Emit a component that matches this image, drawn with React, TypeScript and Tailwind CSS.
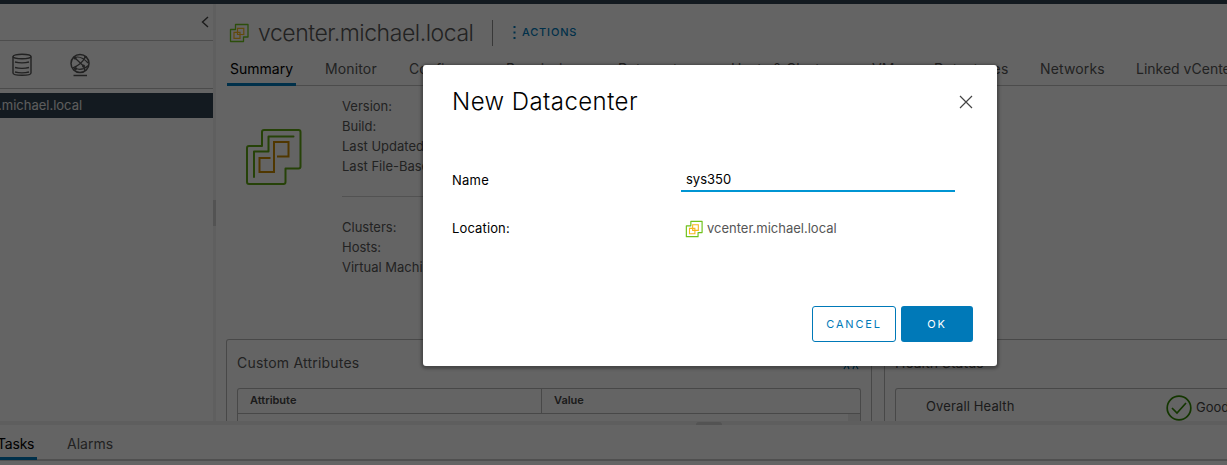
import { ReactNode } from "react";

function VcenterIcon({ className }: { className: string }) {
  return (
    <svg viewBox="0 0 20 20" fill="none" className={className}>
      <path d="M6.500 1.500H19V14h-4.500v4.500H1.500V6.500h5z" stroke="#6fc21c" strokeWidth="1.300" strokeLinejoin="round" />
      <path d="M8.500 5.300h6.300v6.200H8.500zM5 9.300h6v6H5z" stroke="#f5b81c" strokeWidth="1.200" />
    </svg>
  );
}

function VcenterLogo() {
  return (
    <svg viewBox="0 0 56 58" fill="none" className="h-[58px] w-14" strokeLinecap="round" strokeLinejoin="round">
      <path
        d="M18 2h34.500a2 2 0 0 1 2 2V38.500a2 2 0 0 1-2 2H39.500V54a2 2 0 0 1-2 2H3a2 2 0 0 1-2-2V20a2 2 0 0 1 2-2h13V4a2 2 0 0 1 2-2z"
        stroke="#60a515"
        strokeWidth="2"
      />
      <path d="M47.500 8.500H22.500V23.500H8V49" stroke="#60a515" strokeWidth="2" />
      <path d="M31 28.500h11.500V14H28V44H13.500V30H24.500" stroke="#c98a00" strokeWidth="2" strokeLinecap="butt" strokeLinejoin="miter" />
    </svg>
  );
}

function StorageIcon() {
  return (
    <svg viewBox="0 0 20 24" fill="none" stroke="#555" strokeWidth="1.4" className="h-6 w-5">
      <ellipse cx="10" cy="3.500" rx="9" ry="2.200" />
      <path d="M1 3.500v16.500c0 1.400 4 2.300 9 2.300s9-.9 9-2.300V3.500M3 9c3.500 1 10.500 1 14 0M3 14.500c3.500 1 10.500 1 14 0M3 19c3.500 1 10.500 1 14 0" />
    </svg>
  );
}

function NetworkIcon() {
  return (
    <svg viewBox="0 0 20 24" fill="none" stroke="#555" strokeWidth="1.2" className="h-6 w-5">
      <circle cx="10" cy="10.500" r="9" strokeWidth="1.5" />
      <path d="M4.500 4.500 13.500 13M4.500 4.500C9 3 14 5.500 18 10M15.500 3.500C13 9 8 13 2.500 15M5.500 15.500c4 1.500 9 .5 13-3M13.500 13l1.500 5" />
      <path d="M3.500 22.500h13.500" strokeWidth="1.5" />
      <g fill="#555" stroke="none">
        <circle cx="5" cy="5" r="1.500" />
        <circle cx="13.500" cy="13" r="1.500" />
        <circle cx="5.500" cy="15.500" r="1.600" />
        <circle cx="15.500" cy="4" r="1.300" />
      </g>
    </svg>
  );
}

const tabs = [
  { label: "Summary", style: "w-[95px] text-black" },
  { label: "Monitor", style: "w-[84px] tracking-[0.01em]" },
  { label: "Configure", style: "w-[97px]" },
  { label: "Permissions", style: "w-[112px]" },
  { label: "Datacenters", style: "w-[113px]" },
  { label: "Hosts & Clusters", style: "w-[141px]" },
  { label: "VMs", style: "w-[62px]" },
  { label: "Datastores", style: "w-[106px] tracking-[0.025em]" },
  { label: "Networks", style: "w-[96px] tracking-[0.01em]" },
  { label: "Linked vCenter Server Systems", style: "w-[220px]" },
];

function Detail({ children }: { children: ReactNode }) {
  return <div className="h-5 text-[13px] leading-[21px]">{children}</div>;
}

function Sidebar() {
  return (
    <aside className="flex w-[213px] shrink-0 flex-col">
      <div className="flex h-[37px] items-center justify-end border-b border-[#c0c0c0] pr-1">
        <svg viewBox="0 0 8 12" fill="none" stroke="#444" strokeWidth="1.4" className="h-3 w-2">
          <path d="M7 1 1.500 6 7 11" />
        </svg>
      </div>
      <div className="flex h-12 items-center gap-[38px] border-b border-[#bbb] pl-3">
        <StorageIcon />
        <NetworkIcon />
      </div>
      <div className="mt-1 h-[25px] bg-[#304250] text-[13px] leading-[25px] text-[#e8e8e8]">
        <span className="-ml-[2px]">.michael.local</span>
      </div>
    </aside>
  );
}

function Workspace() {
  return (
    <main className="flex min-w-0 flex-1 flex-col overflow-hidden">
      <div className="flex h-[52px] shrink-0 items-center pt-[5px] pl-[13px]">
        <VcenterIcon className="h-5 w-5" />
        <h1 className="ml-[9px] w-[216px] text-[23px] leading-8 font-light tracking-[-0.02em] whitespace-nowrap text-[#565656]">
          vcenter.michael.local
        </h1>
        <div className="ml-[18px] h-[26px] w-px bg-[#8c8c8c]" />
        <div className="ml-5 flex items-center gap-[6px] text-[11px] font-medium tracking-[0.075em] text-[#0079b8]">
          <svg viewBox="0 0 3 15" fill="currentColor" className="h-[15px] w-[3px]">
            <path d="M.5 1h2v2h-2zM.5 6.500h2v2h-2zM.5 12h2v2h-2z" />
          </svg>
          ACTIONS
        </div>
      </div>
      <nav className="relative ml-[11px] flex h-[30px] shrink-0 border-b border-[#bdbdbd] pl-[3px] text-[14px] leading-[26px] text-[#565656]">
        {tabs.map((tab) => (
          <div key={tab.label} className={"shrink-0 whitespace-nowrap " + tab.style}>
            {tab.label}
          </div>
        ))}
        <div className="absolute -bottom-px left-0 h-[3px] w-[69px] bg-[#0079b8]" />
      </nav>
      <section className="flex h-[253px] shrink-0 pl-[30px] text-[#565656]">
        <div className="w-24 pt-[42px]">
          <VcenterLogo />
        </div>
        <div className="w-[500px] pt-[10px]">
          <Detail>Version:</Detail>
          <Detail>Build:</Detail>
          <Detail>Last Updated:</Detail>
          <Detail>Last File-Based Backup:</Detail>
          <div className="mt-5 mb-5 h-px bg-[#cdcdcd]" />
          <Detail>Clusters:</Detail>
          <Detail>Hosts:</Detail>
          <Detail>Virtual Machines:</Detail>
        </div>
      </section>
      <section className="flex h-24 shrink-0 gap-3 pl-[10px]">
        <div className="w-[646px] shrink-0 rounded-t-[3px] border border-b-0 border-[#b5b5b5] px-[10px]">
          <div className="flex h-12 items-center justify-between pb-1 text-[14px] tracking-[0.015em] text-[#565656]">
            Custom Attributes
            <svg viewBox="0 0 16 16" fill="none" stroke="#0079b8" strokeWidth="1.300" className="mr-[2px] h-4 w-4">
              <path d="m1 15 3-5 2 5M10 15l2-5 3 5" />
            </svg>
          </div>
          <div className="h-12 rounded-t-[3px] border border-b-0 border-[#b5b5b5]">
            <div className="flex h-[25px] border-b border-[#b5b5b5] text-[11px] leading-[22px] font-semibold text-[#454545]">
              <div className="w-[304px] border-r border-[#b5b5b5] pl-3">Attribute</div>
              <div className="pl-3">Value</div>
            </div>
            <div className="ml-auto h-6 w-3 bg-[#e8e8e8]" />
          </div>
        </div>
        <div className="w-[360px] shrink-0 rounded-t-[3px] border border-b-0 border-[#b5b5b5] pl-[10px]">
          <div className="h-12 text-[14px] leading-[46px] text-[#565656]">Health Status</div>
          <div className="flex h-12 items-start rounded-tl-[3px] border border-b-0 border-[#b5b5b5] pt-[6px] pl-[30px] text-[13px] text-[#454545]">
            <div className="w-60 leading-[22px] tracking-[0.01em]">Overall Health</div>
            <svg viewBox="0 0 26 26" fill="none" stroke="#318700" strokeWidth="1.700" className="h-[26px] w-[26px]">
              <circle cx="13" cy="13" r="11.800" />
              <path d="m6 13 5 5 9-10" />
            </svg>
            <div className="ml-1 leading-[25px]">Good</div>
          </div>
        </div>
      </section>
    </main>
  );
}

function Dialog() {
  return (
    <div role="dialog" className="absolute top-[65px] left-[423px] flex h-[301px] w-[574px] flex-col rounded-[3px] bg-white px-6 pb-6 pl-[29px] text-[13px] text-black shadow-[0_1px_3px_2px_rgba(0,0,0,0.3)]">
      <div className="flex h-[74px] items-center justify-between">
        <h2 className="text-[24px] leading-8 font-light tracking-[0.018em]">New Datacenter</h2>
        <svg viewBox="0 0 14 14" fill="none" stroke="#444" strokeWidth="1.200" className="h-[14px] w-[14px]">
          <path d="m1 1 12 12M13 1 1 13" />
        </svg>
      </div>
      <div className="mt-[25px] flex h-7 items-center">
        <div className="w-[229px] pt-[5px] tracking-[0.02em]">Name</div>
        <div className="h-7 w-[274px] border-b-2 border-[#0095d3] pl-[5px] leading-[31px]">sys350</div>
      </div>
      <div className="mt-[25px] flex h-[23px] items-center">
        <div className="w-[233px] pt-px tracking-[0.01em]">Location:</div>
        <VcenterIcon className="h-[18px] w-[18px]" />
        <div className="ml-1 pt-px text-[#565656]">vcenter.michael.local</div>
      </div>
      <div className="mt-auto flex justify-end gap-[5px] text-[11px] font-normal tracking-[0.165em]">
        <button className="h-9 w-[84px] rounded-[3px] border border-[#0079b8] pt-px text-[#0079b8]">CANCEL</button>
        <button className="h-9 w-[72px] rounded-[3px] bg-[#0079b8] pt-px text-white">OK</button>
      </div>
    </div>
  );
}

export default function App() {
  return (
    <div className="relative h-[465px] w-[1227px] overflow-hidden bg-[#fafafa] font-[Inter,'Liberation_Sans',sans-serif]">
      <div className="flex h-full flex-col">
        <div className="h-1 shrink-0 bg-[#304250]" />
        <div className="flex h-[417px] shrink-0 overflow-hidden">
          <Sidebar />
          <div className="flex w-[3px] shrink-0 items-center bg-[#eeeeee]">
            <div className="h-[26px] w-[3px] bg-[#d0d0d0]" />
          </div>
          <Workspace />
        </div>
        <div className="flex h-[4px] shrink-0 items-end bg-[#eaeaea]">
          <div className="ml-[696px] h-[3px] w-[26px] rounded-t-sm bg-[#cfcfcf]" />
        </div>
        <div className="relative flex h-[36px] shrink-0 border-b-2 border-[#c5c5c5] text-[14px] leading-[37px] text-[#565656]">
          <div className="-ml-[3px] w-[70px] tracking-[-0.015em] text-black">Tasks</div>
          <div>Alarms</div>
          <div className="absolute -bottom-px left-0 h-[3px] w-[37px] bg-[#0079b8]" />
        </div>
      </div>
      <div className="absolute inset-0 bg-black/60" />
      <Dialog />
    </div>
  );
}
